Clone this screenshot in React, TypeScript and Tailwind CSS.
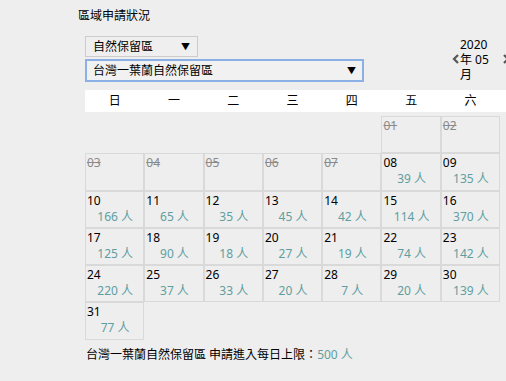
const weekdays = ["日", "一", "二", "三", "四", "五", "六"];

type Day = { d: string; past?: boolean; count?: number } | null;

const counts: Record<number, number> = {
  8: 39, 9: 135, 10: 166, 11: 65, 12: 35, 13: 45, 14: 42, 15: 114, 16: 370,
  17: 125, 18: 90, 19: 18, 20: 27, 21: 19, 22: 74, 23: 142, 24: 220, 25: 37,
  26: 33, 27: 20, 28: 7, 29: 20, 30: 139, 31: 77,
};

const days: Day[] = [null, null, null, null, null];
for (let i = 1; i <= 31; i++) {
  const d = i < 10 ? "0" + i : String(i);
  days.push(i < 8 ? { d, past: true } : { d, count: counts[i] });
}

const Caret = () => <span className="text-[9px] leading-none">▼</span>;

export default function App() {
  return (
    <div className="w-[506px] h-[381px] overflow-hidden bg-[#eeeeee] text-[12px] text-black font-['Noto_Sans','Noto_Sans_CJK_TC',sans-serif]">
      <div className="pl-[78px] pt-[8px] leading-[16px]">區域申請狀況</div>

      {/* selects + month nav */}
      <div className="flex h-[46px] pl-[85px] mt-[12px]">
        <div className="w-[279px] shrink-0 flex flex-col gap-[2px]">
          <div className="w-[113px] h-[21px] border border-[#cccccc] bg-[#efefef] flex items-center justify-between pl-[7px] pr-[7px]">
            <span>自然保留區</span>
            <Caret />
          </div>
          <div className="h-[23px] border-2 border-[#8ab0e6] bg-[#f1f1f1] flex items-center justify-between pl-[6px] pr-[6px]">
            <span>台灣一葉蘭自然保留區</span>
            <Caret />
          </div>
        </div>
        <div className="ml-[88px] shrink-0 flex items-center">
          <svg width="8" height="12" viewBox="0 0 8 12" className="text-[#555]">
            <polyline points="6,2 2,6 6,10" fill="none" stroke="currentColor" strokeWidth="2.2" />
          </svg>
          <div className="w-[42px] leading-[15px]">2020 年 05 月</div>
          <svg width="8" height="12" viewBox="0 0 8 12" className="text-[#555]">
            <polyline points="2,2 6,6 2,10" fill="none" stroke="currentColor" strokeWidth="2.2" />
          </svg>
        </div>
      </div>

      <div className="ml-[85px] mt-[8px] h-[22px] bg-white grid grid-cols-[repeat(7,59.3px)] items-center">
        {weekdays.map((w) => (
          <div key={w} className="text-center leading-[16px]">{w}</div>
        ))}
      </div>

      <div className="ml-[85px] mt-[4px] grid grid-cols-[repeat(7,59.3px)] auto-rows-[37.3px]">
        {days.map((day, i) =>
          day ? (
            <div key={i} className="border border-[#d9d9d9] pl-[1px] pt-[1px] leading-[16px]">
              {day.past ? (
                <div className="text-[#8a8a8a] line-through">{day.d}</div>
              ) : (
                <>
                  <div>{day.d}</div>
                  <div className="text-center text-[#5f9ea0]">{day.count} 人</div>
                </>
              )}
            </div>
          ) : (
            <div key={i} />
          )
        )}
      </div>

      <div className="pl-[86px] mt-[7px] leading-[16px]">
        台灣一葉蘭自然保留區 申請進入每日上限：<span className="text-[#5f9ea0]">500 人</span>
      </div>
    </div>
  );
}
